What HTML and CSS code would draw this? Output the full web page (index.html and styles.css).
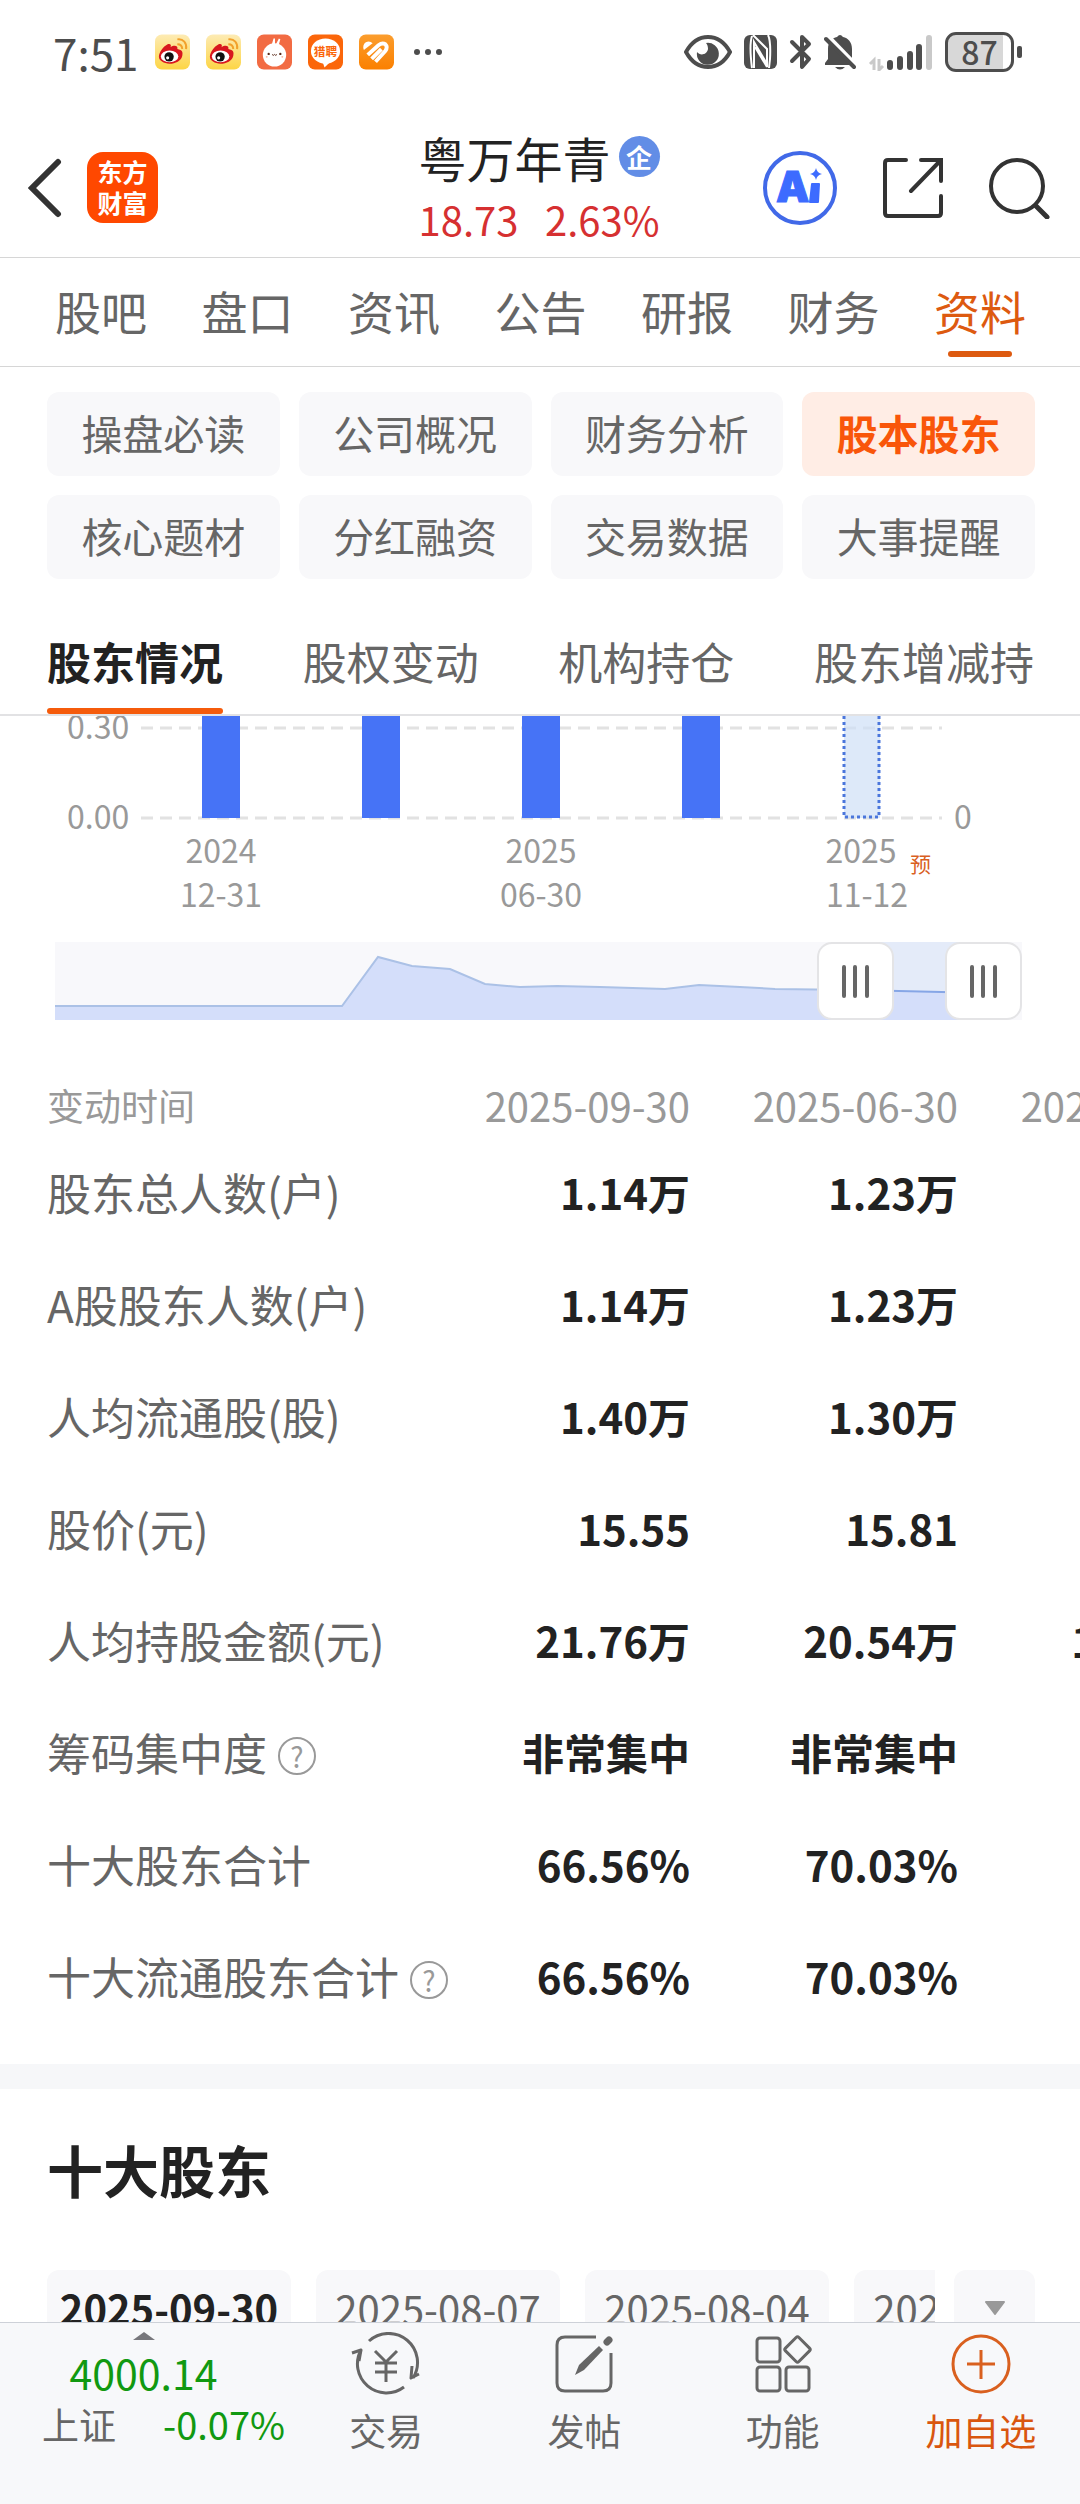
FILE: index.html
```html
<!DOCTYPE html>
<html lang="zh-CN">
<head>
    <meta charset="UTF-8">
    <meta name="viewport" content="width=device-width, initial-scale=1.0">
    <title>粤万年青 - 股本股东</title>
    <link rel="stylesheet" href="styles.css">
</head>
<body>

    <!-- Status bar -->
    <div class="status-bar">
        <div class="status-left">
            <span class="clock">7:51</span>
            <svg class="app-icon" viewBox="0 0 36 36">
                <defs>
                    <linearGradient id="weiboBg" x1="0" y1="0" x2="0" y2="1">
                        <stop offset="0" stop-color="#fdebb4"/>
                        <stop offset="1" stop-color="#fdd545"/>
                    </linearGradient>
                    <g id="weibo">
                        <rect width="36" height="36" rx="7" fill="url(#weiboBg)"/>
                        <path d="M4 23c0-5 5-11 9-13 3-1 4 1 3 3 3-2 8-2 7 2 5 1 6 3 5 7-1 5-7 8-13 8S4 27 4 23z" fill="#d8171f"/>
                        <ellipse cx="15" cy="22.500" rx="9" ry="6" fill="#fff"/>
                        <circle cx="14.500" cy="23" r="4.800" fill="#111"/>
                        <circle cx="13" cy="24" r="1.600" fill="#fff"/>
                        <path d="M23 5c6-1 10 4 9 10M23 10c4 0 5 2 5 5" fill="none" stroke="#f2a12c" stroke-width="2"/>
                    </g>
                </defs>
                <use href="#weibo"/>
            </svg>
            <svg class="app-icon" viewBox="0 0 36 36"><use href="#weibo"/></svg>
            <svg class="app-icon" viewBox="0 0 36 36">
                <rect width="36" height="36" rx="7" fill="#f26b43"/>
                <path d="M15 11l2-7 1.500 0 0 6 1 0 3-6 1.500 1-2 7z" fill="#fff"/>
                <circle cx="18" cy="21" r="12" fill="#fff"/>
                <circle cx="12" cy="20" r="1.200" fill="#5a2a1a"/>
                <circle cx="24" cy="20" r="1.200" fill="#5a2a1a"/>
                <path d="M15.500 20.500q1.300 2 2.500 0 1.300 2 2.500 0" fill="none" stroke="#5a2a1a"/>
                <circle cx="10" cy="23" r="1" fill="#f7b5a0"/>
                <circle cx="26" cy="23" r="1" fill="#f7b5a0"/>
            </svg>
            <svg class="app-icon" viewBox="0 0 36 36">
                <rect width="36" height="36" rx="7" fill="#fb660a"/>
                <ellipse cx="18" cy="17" rx="15" ry="13" fill="#fff"/>
                <path d="M15 28l2 6 6-6z" fill="#fff"/>
                <text x="18" y="22" class="liepin">猎聘</text>
            </svg>
            <svg class="app-icon" viewBox="0 0 36 36">
                <defs>
                    <linearGradient id="orangeBg" x1="0" y1="0" x2="0" y2="1">
                        <stop offset="0" stop-color="#fb9d2d"/>
                        <stop offset="1" stop-color="#fb8000"/>
                    </linearGradient>
                </defs>
                <rect width="36" height="36" rx="7" fill="url(#orangeBg)"/>
                <path d="M5 16Q3 11 7 8q4-2 7 1z" fill="#fff"/>
                <path d="M9 21L20 11Q24 8 27 10 30 13 27 17L17 28M13 25l10-10" fill="none" stroke="#fff" stroke-width="4"/>
            </svg>
            <svg class="dots" viewBox="0 0 28 6" fill="#4d4d4d">
                <circle cx="3" cy="3" r="3"/><circle cx="14" cy="3" r="3"/><circle cx="25" cy="3" r="3"/>
            </svg>
        </div>
        <div class="status-right">
            <svg width="48" height="34" viewBox="0 0 48 34">
                <path d="M2 17C13-3 35-3 46 17 35 37 13 37 2 17z" fill="none" stroke="#4d4d4d" stroke-width="4"/>
                <path d="M22 8a11 11 0 1 1-9 9c3 4 10 3 11-3 0-3-1-5-2-6z" fill="#4d4d4d"/>
            </svg>
            <svg width="33" height="34" viewBox="0 0 33 34">
                <rect width="33" height="34" rx="6" fill="#4d4d4d"/>
                <path d="M8 1Q5 10 8 33M10 33V7l13 22V14L9 0M24 0q3 6 2 24l-1 9M11 12l12 20" fill="none" stroke="#fff" stroke-width="2"/>
            </svg>
            <svg width="23" height="36" viewBox="0 0 23 36">
                <path d="M3 8l17 17-7 8V3l7 7L3 27" fill="none" stroke="#4d4d4d" stroke-width="4" stroke-linecap="round" stroke-linejoin="round"/>
            </svg>
            <svg width="32" height="36" viewBox="0 0 32 36">
                <path d="M1 31v-2l3-4V15C4 8 8 4 13 3q3-4 6 0c5 1 9 5 9 12v10l2 6z" fill="#4d4d4d"/>
                <path d="M11 33h10q-5 5-10 0z" fill="#4d4d4d"/>
                <path d="M4 2l28 29" stroke="#fff" stroke-width="4"/>
                <path d="M2 5l28 28" stroke="#4d4d4d" stroke-width="4" stroke-linecap="round"/>
            </svg>
            <svg width="65" height="37" viewBox="0 0 65 37">
                <path d="M6 36V26l-4 4M11 25v11l4-4" fill="none" stroke="#c9c9c9" stroke-width="3"/>
                <g stroke="#4d4d4d" stroke-width="6" stroke-linecap="round">
                    <path d="M22 29v4M32 25v8M42 20v13M51 13v20"/>
                    <path d="M61 4v29" stroke="#c9c9c9"/>
                </g>
            </svg>
            <div class="battery">87</div>
        </div>
    </div>

    <!-- Stock header -->
    <header class="stock-header">
        <div class="header-left">
            <button class="icon-btn" aria-label="返回">
                <svg width="34" height="60" viewBox="0 0 34 60">
                    <path d="M30 4L4 30l26 26" fill="none" stroke="#333" stroke-width="6" stroke-linecap="round"/>
                </svg>
            </button>
            <a class="brand" href="#">东方<br>财富</a>
        </div>
        <div class="stock">
            <h1>粤万年青<span class="ent">企</span></h1>
            <div class="quote"><span>18.73</span><span>2.63%</span></div>
        </div>
        <div class="header-right">
            <button class="icon-btn" aria-label="AI">
                <svg width="76" height="76" viewBox="0 0 76 76">
                    <circle cx="38" cy="38" r="35" fill="none" stroke="#4169e8" stroke-width="4"/>
                    <text x="14" y="52" class="ai-text">A</text>
                    <path d="M50 34h7l-1 18h-8z" fill="#3d6bff" stroke="#3d6bff" stroke-width="2" stroke-linejoin="round"/>
                    <path d="M54 18q1 5 6 6-5 1-6 6-1-5-6-6 5-1 6-6z" fill="#3d6bff"/>
                </svg>
            </button>
            <button class="icon-btn" aria-label="分享">
                <svg width="60" height="60" viewBox="0 0 60 60">
                    <path d="M23 2H5Q2 2 2 5v50q0 3 3 3h50q3 0 3-3V38M38 2h20v21M58 2L28 33" fill="none" stroke="#333" stroke-width="4" stroke-linecap="round"/>
                </svg>
            </button>
            <button class="icon-btn" aria-label="搜索">
                <svg width="62" height="62" viewBox="0 0 62 62">
                    <circle cx="29" cy="29" r="26" fill="none" stroke="#333" stroke-width="4"/>
                    <path d="M48 49l11 11" stroke="#333" stroke-width="5" stroke-linecap="round"/>
                </svg>
            </button>
        </div>
    </header>

    <!-- Main tabs -->
    <nav class="tabs">
        <a href="#">股吧</a>
        <a href="#">盘口</a>
        <a href="#">资讯</a>
        <a href="#">公告</a>
        <a href="#">研报</a>
        <a href="#">财务</a>
        <a href="#" class="active">资料</a>
    </nav>

    <!-- Category buttons -->
    <div class="chips">
        <button>操盘必读</button>
        <button>公司概况</button>
        <button>财务分析</button>
        <button class="active">股本股东</button>
        <button>核心题材</button>
        <button>分红融资</button>
        <button>交易数据</button>
        <button>大事提醒</button>
    </div>

    <nav class="sub-tabs">
        <a href="#" class="active">股东情况</a>
        <a href="#">股权变动</a>
        <a href="#">机构持仓</a>
        <a href="#">股东增减持</a>
    </nav>

    <main>
        <!-- Chart -->
        <svg class="chart" viewBox="0 0 1080 334">
            <g stroke="#e2e2e2" stroke-width="3" stroke-dasharray="12 7">
                <path d="M141 12h801M141 102h801"/>
            </g>
            <g fill="#4673f6">
                <rect x="202" y="0" width="38" height="102"/>
                <rect x="362" y="0" width="38" height="102"/>
                <rect x="522" y="0" width="38" height="102"/>
                <rect x="682" y="0" width="38" height="102"/>
            </g>
            <rect x="844" y="0" width="36" height="102" fill="#cfe0f7" fill-opacity="0.7"/>
            <path d="M844 0v101h35V0" fill="none" stroke="#4a76dc" stroke-width="3" stroke-dasharray="3 3"/>
            <g class="axis">
                <text x="67" y="23">0.30</text>
                <text x="67" y="113">0.00</text>
                <text x="954" y="113">0</text>
                <g text-anchor="middle">
                    <text x="221" y="147">2024</text>
                    <text x="221" y="191">12-31</text>
                    <text x="541" y="147">2025</text>
                    <text x="541" y="191">06-30</text>
                    <text x="861" y="147">2025</text>
                    <text x="867" y="191">11-12</text>
                </g>
            </g>
            <text x="910" y="156" class="forecast">预</text>

            <!-- Range slider -->
            <rect x="55" y="226" width="967" height="78" fill="#f8f8fb"/>
            <rect x="856" y="226" width="128" height="78" fill="#e4ebf9"/>
            <path d="M55 290H342L378 241 412 250 450 253 485 268 520 271 557 270 600 271 665 273 699 269 740 271 775 273 856 274 984 277V304H55z" fill="#d4defa"/>
            <path d="M55 290H342L378 241 412 250 450 253 485 268 520 271 557 270 600 271 665 273 699 269 740 271 775 273 856 274" fill="none" stroke="#abc1e6" stroke-width="2"/>
            <path d="M856 274L984 277" stroke="#86a6e6" stroke-width="2"/>
            <g fill="#fff" stroke="#e4e4e6" stroke-width="2">
                <rect x="818" y="227" width="75" height="76" rx="14"/>
                <rect x="946" y="227" width="75" height="76" rx="14"/>
            </g>
            <path d="M844 251v29M855 251v29M867 251v29M972 251v29M983 251v29M995 251v29" stroke="#666" stroke-width="4" stroke-linecap="round"/>
        </svg>

        <!-- Holder numbers -->
        <div class="table-wrap">
            <table class="holders">
                <thead>
                    <tr><th>变动时间</th><th>2025-09-30</th><th>2025-06-30</th><th>2025-03-31</th></tr>
                </thead>
                <tbody>
                    <tr><th>股东总人数(户)</th><td>1.14万</td><td>1.23万</td><td></td></tr>
                    <tr><th>A股股东人数(户)</th><td>1.14万</td><td>1.23万</td><td></td></tr>
                    <tr><th>人均流通股(股)</th><td>1.40万</td><td>1.30万</td><td></td></tr>
                    <tr><th>股价(元)</th><td>15.55</td><td>15.81</td><td></td></tr>
                    <tr><th>人均持股金额(元)</th><td>21.76万</td><td>20.54万</td><td>19.98万</td></tr>
                    <tr><th>筹码集中度<button class="help" aria-label="说明">?</button></th><td>非常集中</td><td>非常集中</td><td></td></tr>
                    <tr><th>十大股东合计</th><td>66.56%</td><td>70.03%</td><td></td></tr>
                    <tr><th>十大流通股东合计<button class="help" aria-label="说明">?</button></th><td>66.56%</td><td>70.03%</td><td></td></tr>
                </tbody>
            </table>
        </div>

        <!-- Top ten holders -->
        <section class="top-ten">
            <h2>十大股东</h2>
            <div class="dates">
                <div class="date-list">
                    <button class="active">2025-09-30</button>
                    <button>2025-08-07</button>
                    <button>2025-08-04</button>
                    <button>2025-06-30</button>
                </div>
                <button class="more" aria-label="更多日期">
                    <svg width="20" height="14" viewBox="0 0 20 14"><path d="M1 1h18l-9 12z" fill="#999" stroke="#999" stroke-width="2" stroke-linejoin="round"/></svg>
                </button>
            </div>
        </section>
    </main>

    <!-- Bottom bar -->
    <footer class="bottom-bar">
        <a class="index" href="#">
            <svg width="22" height="8" viewBox="0 0 22 8"><path d="M0 8L11 0l11 8z" fill="#77777c"/></svg>
            <span class="index-value">4000.14</span>
            <span class="index-row"><span class="index-name">上证</span><span class="index-change">-0.07%</span></span>
        </a>
        <a class="action" href="#">
            <svg viewBox="0 0 70 64" fill="none" stroke="#666" stroke-width="3">
                <path d="M18 9A29 29 0 0 1 62 46M53 55A29 29 0 0 1 10 18"/>
                <path d="M1 21l9-3-2 11M68 42l-8 4 1-12" stroke-linejoin="round"/>
                <path d="M24 19l11 11 11-11M35 30v20M24 31h22M24 40h22"/>
            </svg>
            交易
        </a>
        <a class="action" href="#">
            <svg viewBox="0 0 70 64" fill="none" stroke="#666" stroke-width="3">
                <path d="M47 5H16Q8 5 8 13v38q0 8 8 8h38q8 0 8-8V21"/>
                <path d="M26 43l4-10 20-19 4 4-19 20z" fill="#666" stroke="none"/>
                <path d="M58 10l2-2" stroke-width="7" stroke-linecap="round"/>
            </svg>
            发帖
        </a>
        <a class="action" href="#">
            <svg viewBox="0 0 70 64" fill="none" stroke="#666" stroke-width="3">
                <rect x="9" y="6" width="23" height="24" rx="3"/>
                <rect x="9" y="35" width="23" height="24" rx="3"/>
                <rect x="38" y="35" width="23" height="24" rx="3"/>
                <rect x="40" y="8" width="19" height="19" rx="2" transform="rotate(45 49.500 17.500)"/>
            </svg>
            功能
        </a>
        <a class="action add" href="#">
            <svg viewBox="0 0 70 64" fill="none" stroke="#d9601f" stroke-width="3">
                <circle cx="35" cy="32" r="28"/>
                <path d="M35 18v29M21 32h28"/>
            </svg>
            加自选
        </a>
    </footer>

</body>
</html>
```
FILE: styles.css
```css
* {
    margin: 0;
    padding: 0;
    box-sizing: border-box;
}

body {
    display: flex;
    flex-direction: column;
    height: 100vh;
    overflow: hidden;
    background: #fff;
    color: #666;
    font-family: "Noto Sans CJK SC", sans-serif;
}

a {
    color: inherit;
    text-decoration: none;
}

button {
    border: none;
    background: none;
    color: inherit;
    font: inherit;
    cursor: pointer;
}

svg {
    display: block;
}

/* Status bar */
.status-bar {
    display: flex;
    flex: none;
    justify-content: space-between;
    align-items: center;
    height: 104px;
    padding: 0 66px 0 53px;
    color: #4d4d4d;
}

.status-left {
    display: flex;
    align-items: center;
    gap: 16px;
}

.clock {
    font-size: 44px;
    line-height: 48px;
}

.app-icon {
    width: 35px;
    height: 36px;
}

.liepin {
    fill: #fb660a;
    font-size: 12px;
    font-weight: bold;
    text-anchor: middle;
}

.dots {
    width: 28px;
    height: 6px;
    margin-left: 4px;
}

.status-right {
    display: flex;
    align-items: center;
    gap: 12px;
}

.battery {
    position: relative;
    width: 69px;
    height: 40px;
    border: 3px solid #4d4d4d;
    border-radius: 11px;
    background: linear-gradient(to right, #d8d8d8 88%, #fff 88%);
    font-size: 32px;
    font-weight: 500;
    line-height: 32px;
    text-align: center;
}

.battery::after {
    content: "";
    position: absolute;
    top: 11px;
    right: -11px;
    width: 5px;
    height: 12px;
    border-radius: 2px;
    background: #4d4d4d;
}

/* Stock header */
.stock-header {
    display: grid;
    flex: none;
    grid-template-columns: 1fr auto 1fr;
    align-items: center;
    height: 154px;
    padding: 14px 30px 0 28px;
    border-bottom: 1px solid #d6d6d6;
}

.header-left,
.header-right {
    display: flex;
    align-items: center;
}

.header-left {
    gap: 25px;
}

.header-right {
    justify-content: flex-end;
    gap: 45px;
}

.brand {
    width: 71px;
    height: 71px;
    padding-top: 4px;
    border-radius: 16px;
    background: #ff4800;
    color: #fff;
    font-size: 25px;
    font-weight: bold;
    line-height: 31px;
    text-align: center;
}

.stock h1 {
    display: flex;
    align-items: center;
    gap: 8px;
    color: #222;
    font-size: 48px;
    font-weight: normal;
    line-height: 62px;
}

.ent {
    width: 41px;
    border-radius: 50%;
    background: #628de6;
    color: #fff;
    font-size: 26px;
    font-weight: bold;
    line-height: 41px;
    text-align: center;
}

.quote {
    display: flex;
    justify-content: space-between;
    color: #d63031;
    font-size: 40px;
    line-height: 62px;
}

.ai-text {
    fill: #3d6bff;
    stroke: #3d6bff;
    stroke-width: 1px;
    font: 900 42px Inter, sans-serif;
}

/* Main tabs */
.tabs {
    display: flex;
    flex: none;
    justify-content: space-between;
    height: 109px;
    padding: 0 54px 0 55px;
    border-bottom: 1px solid #d6d6d6;
    font-size: 46px;
    line-height: 104px;
}

.tabs a,
.sub-tabs a {
    position: relative;
}

.tabs .active {
    color: #dd5a10;
}

.tabs .active::after {
    content: "";
    position: absolute;
    bottom: 9px;
    left: 14px;
    width: 64px;
    height: 6px;
    border-radius: 3px;
    background: #dd5a10;
}

/* Category buttons */
.chips {
    display: grid;
    flex: none;
    grid-template-columns: repeat(4, 1fr);
    gap: 19px;
    padding: 25px 45px 0 47px;
}

.chips button {
    height: 84px;
    padding-bottom: 4px;
    border-radius: 12px;
    background: #f8f8fa;
    font-size: 41px;
    line-height: 80px;
}

.chips .active {
    background: #ffede5;
    color: #f9560a;
    font-weight: bold;
}

/* Sub tabs */
.sub-tabs {
    display: flex;
    flex: none;
    justify-content: space-between;
    height: 137px;
    padding: 30px 46px 0 47px;
    border-bottom: 2px solid #e2e2e4;
    font-size: 44px;
    line-height: 105px;
}

.sub-tabs .active {
    color: #222;
    font-weight: bold;
}

.sub-tabs .active::after {
    content: "";
    position: absolute;
    bottom: 0;
    left: 0;
    width: 100%;
    height: 6px;
    border-radius: 3px;
    background: #f55b0b;
}

/* Scrolling content */
main {
    flex: 1;
    min-height: 0;
    overflow: hidden;
}

.chart {
    width: 100%;
}

.axis text {
    fill: #999;
    font-size: 32px;
}

.forecast {
    fill: #d9601f;
    font-size: 21px;
}

/* Holder numbers */
.table-wrap {
    overflow: hidden;
}

.holders {
    width: 1226px;
    table-layout: fixed;
    border-collapse: collapse;
    font-size: 44px;
    line-height: 60px;
}

.holders th,
.holders td {
    width: 268px;
    height: 112px;
    text-align: right;
    white-space: nowrap;
}

.holders th:first-child {
    width: 422px;
    padding-left: 47px;
    font-weight: normal;
    text-align: left;
}

.holders td {
    color: #222;
    font-size: 42px;
    font-weight: bold;
}

.holders thead th {
    height: 86px;
    padding-top: 24px;
    color: #999;
    font-size: 40px;
    font-weight: normal;
}

.holders thead th:first-child {
    font-size: 37px;
}

.help {
    width: 38px;
    height: 38px;
    margin-left: 11px;
    border: 2px solid #999;
    border-radius: 50%;
    color: #999;
    font-size: 28px;
    line-height: 34px;
    vertical-align: 3px;
}

/* Top ten holders */
.top-ten {
    margin-top: 32px;
    padding: 44px 45px 0 47px;
    border-top: 25px solid #f6f7f9;
}

.top-ten h2 {
    color: #222;
    font-size: 56px;
    line-height: 72px;
}

.dates {
    display: flex;
    gap: 19px;
    margin-top: 65px;
}

.date-list {
    display: flex;
    flex: 1;
    gap: 25px;
    overflow: hidden;
}

.dates button {
    flex: none;
    width: 244px;
    height: 76px;
    border-radius: 12px;
    background: #f8f8fa;
    font-size: 40px;
    line-height: 76px;
}

.dates .active {
    color: #222;
    font-weight: bold;
}

.dates .more {
    display: flex;
    align-items: center;
    justify-content: center;
    width: 81px;
}

/* Bottom bar */
.bottom-bar {
    display: grid;
    flex: none;
    grid-template-columns: 287px repeat(4, 1fr);
    height: 182px;
    border-top: 1px solid #cdd1d8;
    background: #f7f8fa;
    font-size: 37px;
    line-height: 48px;
}

.index {
    display: flex;
    flex-direction: column;
    align-items: center;
    padding-top: 9px;
}

.index-value {
    margin-top: 4px;
    color: #119911;
    font-size: 41px;
    line-height: 56px;
}

.index-row {
    display: flex;
    align-items: center;
    justify-content: space-between;
    width: 100%;
    padding: 0 2px 0 42px;
}

.index-change {
    color: #119911;
    font-size: 38px;
}

.action {
    display: flex;
    flex-direction: column;
    align-items: center;
    gap: 10px;
    padding-top: 9px;
}

.action svg {
    width: 70px;
    height: 64px;
}

.add {
    color: #d9560f;
}
```
